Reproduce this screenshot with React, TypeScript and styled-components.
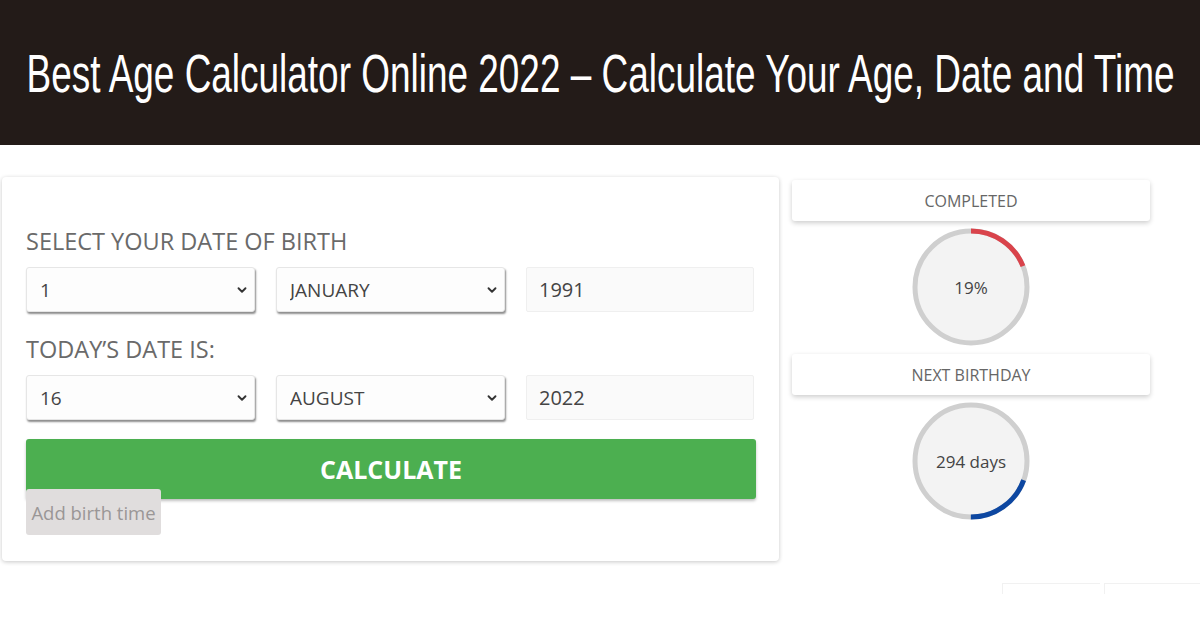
import React, { useLayoutEffect, useRef, useState } from "react";
import styled, { createGlobalStyle } from "styled-components";
import { ChevronDown } from "lucide-react";

const GlobalStyle = createGlobalStyle`
   html, body {
      margin: 0;
      padding: 0;
      background: #ffffff;
   }
   body {
      width: 1200px;
      height: 630px;
      overflow: hidden;
      font-family: "Open Sans", "Noto Sans", sans-serif;
   }
`;

const Banner = styled.header`
   height: 145px;
   background: #231b18;
   display: flex;
   align-items: center;
   justify-content: center;
   overflow: hidden;
`;

const Title = styled.h1`
   margin: 0;
   flex-shrink: 0;
   color: #ffffff;
   font-family: "Liberation Sans", Arial, sans-serif;
   font-weight: 400;
   font-size: 53px;
   white-space: nowrap;
   padding-top: 2px;
   transform-origin: center;
`;

const Main = styled.main`
   display: flex;
   align-items: flex-start;
   gap: 13px;
   padding: 32px 0 0 2px;
`;

const Card = styled.section`
   width: 777px;
   box-sizing: border-box;
   padding: 48px 24px 26px 24px;
   background: #ffffff;
   border-radius: 4px;
   box-shadow: 0 1px 4px rgba(0, 0, 0, 0.22);
`;

const Label = styled.div<{ $gap?: number }>`
   margin-top: ${(p) => p.$gap ?? 0}px;
   font-size: 23.5px;
   line-height: 32px;
   color: #6a6a6a;
   font-weight: 400;
`;

const FieldRow = styled.div`
   display: grid;
   grid-template-columns: 229px 229px 228px;
   gap: 21px;
   margin-top: 10px;
`;

const SelectWrap = styled.div`
   position: relative;
   height: 45px;
`;

const Select = styled.select`
   appearance: none;
   width: 100%;
   height: 100%;
   box-sizing: border-box;
   padding: 0 30px 0 13px;
   border: 1px solid #e6e6e6;
   border-radius: 3px;
   background: #fdfdfd;
   box-shadow: 1px 2px 2px rgba(0, 0, 0, 0.45);
   font-family: "Open Sans", "Noto Sans", sans-serif;
   font-size: 19px;
   color: #444;
   outline: none;
`;

const Chevron = styled(ChevronDown)`
   position: absolute;
   right: 6px;
   top: 16px;
   color: #333;
   pointer-events: none;
`;

const YearInput = styled.input`
   height: 45px;
   box-sizing: border-box;
   padding: 0 12px;
   border: 1px solid #efefef;
   border-radius: 2px;
   background: #fafafa;
   font-family: "Open Sans", "Noto Sans", sans-serif;
   font-size: 20px;
   color: #444;
   outline: none;
`;

const CalcButton = styled.button`
   display: block;
   width: 730px;
   height: 60px;
   margin-top: 19px;
   border: none;
   border-radius: 3px;
   background: #4caf50;
   box-shadow: 0 2px 3px rgba(0, 0, 0, 0.25);
   color: #ffffff;
   font-family: "Open Sans", "Noto Sans", sans-serif;
   font-weight: 700;
   font-size: 25px;
   padding-bottom: 2px;
`;

const TimeButton = styled.button`
   position: relative;
   display: block;
   margin-top: -10px;
   height: 46px;
   width: 135px;
   border: none;
   border-radius: 3px;
   background: #e0dddd;
   color: #9a9696;
   font-family: "Open Sans", "Noto Sans", sans-serif;
   font-size: 18.5px;
   padding: 0;
`;

const Side = styled.aside`
   width: 358px;
   display: flex;
   flex-direction: column;
   align-items: center;
   padding-top: 3px;
`;

const StatHead = styled.div<{ $gap?: number }>`
   align-self: stretch;
   height: 41px;
   margin-top: ${(p) => p.$gap ?? 0}px;
   display: flex;
   align-items: center;
   justify-content: center;
   background: #ffffff;
   border-radius: 3px;
   box-shadow: 0 2px 5px rgba(0, 0, 0, 0.2);
   font-size: 16px;
   color: #666;
`;

const Ring = styled.div`
   position: relative;
   width: 118px;
   height: 118px;
   margin-top: 7px;
   display: flex;
   align-items: center;
   justify-content: center;
`;

const RingSvg = styled.svg`
   position: absolute;
   inset: 0;
`;

const RingText = styled.span`
   position: relative;
   font-size: 17px;
   color: #444;
`;

const Footer = styled.div`
   display: flex;
   justify-content: flex-end;
   gap: 4px;
   margin-top: 22px;
`;

const FaintBar = styled.div<{ $w: number }>`
   width: ${(p) => p.$w}px;
   height: 10px;
   border-top: 1px solid #f1f1f1;
   border-left: 1px solid #f1f1f1;
`;

const R = 56;
const C = 2 * Math.PI * R;
const TITLE_WIDTH = 1148;

type RingProps = { label: string; startDeg: number; sweepDeg: number; color: string };

const Progress = ({ label, startDeg, sweepDeg, color }: RingProps) => (
   <Ring>
      <RingSvg width="118" height="118" viewBox="0 0 118 118">
         <circle cx="59" cy="59" r={R} fill="#f3f3f3" stroke="#cfcfcf" strokeWidth="5" />
         <circle
            cx="59"
            cy="59"
            r={R}
            fill="none"
            stroke={color}
            strokeWidth="5"
            strokeDasharray={`${(sweepDeg / 360) * C} ${C}`}
            transform={`rotate(${startDeg - 90} 59 59)`}
         />
      </RingSvg>
      <RingText>{label}</RingText>
   </Ring>
);

const DateSelect = ({ value }: { value: string }) => (
   <SelectWrap>
      <Select value={value} onChange={() => {}}>
         <option>{value}</option>
      </Select>
      <Chevron size={14} strokeWidth={3.2} />
   </SelectWrap>
);

// the banner font is a condensed face; squeeze the regular one to the same width
const BannerTitle = ({ children }: { children: string }) => {
   const ref = useRef<HTMLHeadingElement>(null);
   const [scale, setScale] = useState(0.7);
   useLayoutEffect(() => {
      if (ref.current) setScale(TITLE_WIDTH / ref.current.offsetWidth);
   }, []);
   return (
      <Title ref={ref} style={{ transform: `scaleX(${scale})` }}>
         {children}
      </Title>
   );
};

const App = () => {
   return (
      <>
         <GlobalStyle />
         <Banner>
            <BannerTitle>Best Age Calculator Online 2022 – Calculate Your Age, Date and Time</BannerTitle>
         </Banner>
         <Main>
            <Card>
               <Label>SELECT YOUR DATE OF BIRTH</Label>
               <FieldRow>
                  <DateSelect value="1" />
                  <DateSelect value="JANUARY" />
                  <YearInput value="1991" readOnly />
               </FieldRow>
               <Label $gap={21}>TODAY’S DATE IS:</Label>
               <FieldRow>
                  <DateSelect value="16" />
                  <DateSelect value="AUGUST" />
                  <YearInput value="2022" readOnly />
               </FieldRow>
               <CalcButton>CALCULATE</CalcButton>
               <TimeButton>Add birth time</TimeButton>
            </Card>
            <Side>
               <StatHead>COMPLETED</StatHead>
               <Progress label="19%" startDeg={0} sweepDeg={68} color="#d9434b" />
               <StatHead $gap={8}>NEXT BIRTHDAY</StatHead>
               <Progress label="294 days" startDeg={110} sweepDeg={70} color="#0d47a1" />
            </Side>
         </Main>
         <Footer>
            <FaintBar $w={97} />
            <FaintBar $w={95} />
         </Footer>
      </>
   );
};

export default App;
